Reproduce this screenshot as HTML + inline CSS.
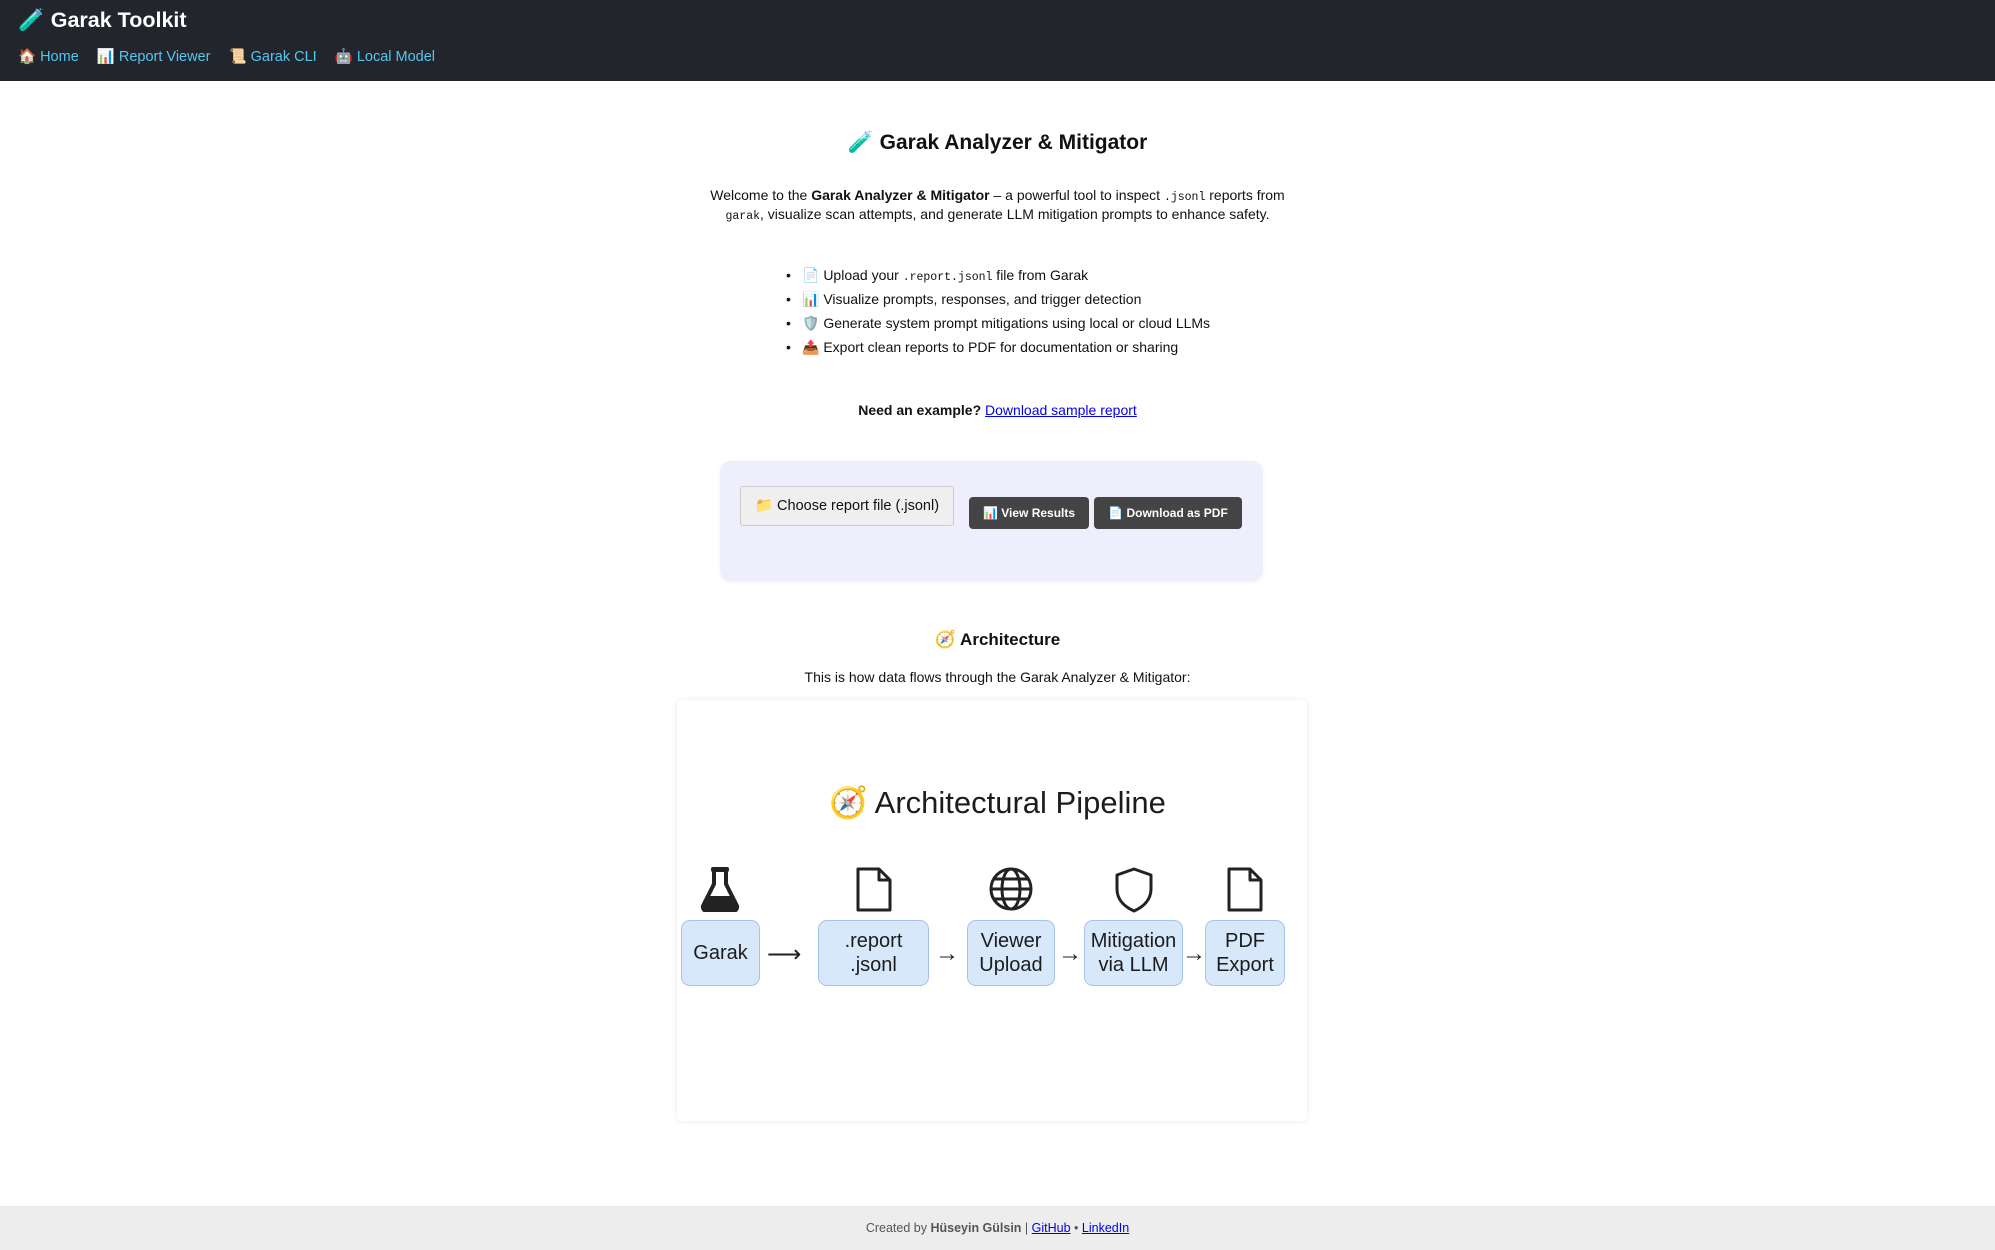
<!DOCTYPE html>
<html><head><meta charset="utf-8">
<style>
*{box-sizing:border-box;margin:0;padding:0}
body{width:1995px;height:1250px;position:relative;background:#fff;font-family:"Liberation Sans",Arial,sans-serif;color:#111;overflow:hidden}
.hdr{position:absolute;left:0;top:0;width:1995px;height:81px;background:#22252c}
.hdr .t{position:absolute;left:18px;top:8px;font-size:21.5px;font-weight:bold;color:#fff}
.nav{position:absolute;left:18px;top:48px;font-size:14.5px;color:#52c7ef}
.nav span{margin-right:14px}
.c{position:absolute;left:0;width:1995px;text-align:center}
code{font-family:"Liberation Mono",monospace;font-size:11.5px}
a{color:#0000ee;text-decoration:underline}
ul{position:absolute;left:786px;top:263px;list-style:none;font-size:14px}
ul li:before{content:"•";position:absolute;left:0}
ul li{padding-left:16px;position:relative;height:24px;line-height:24px}
.box{position:absolute;left:720px;top:461px;width:543px;height:120px;background:#eeeefc;border-radius:11px;box-shadow:0 1px 4px rgba(0,0,0,.06)}
.choose{position:absolute;left:740px;top:486px;width:214px;height:40px;background:#efefef;border:1px solid #ccc;border-radius:3px;font-size:14.5px;line-height:38px;text-align:center}
.btn{position:absolute;top:497px;height:32px;background:#444;color:#fff;border-radius:4px;font-size:12px;font-weight:bold;line-height:32px;text-align:center}
.card{position:absolute;left:677px;top:700px;width:630px;height:421px;background:#fff;box-shadow:0 0 6px rgba(0,0,0,.09);border-radius:4px}
.pb{position:absolute;top:920px;height:66px;background:#d8e8fb;border:1.5px solid #a5c3ea;border-radius:9px;font-size:20px;line-height:24px;text-align:center;display:flex;align-items:center;justify-content:center;color:#1c1c1c}
.ar{position:absolute;top:940px;font-size:24px;color:#222}
.ft{position:absolute;left:0;top:1206px;width:1995px;height:44px;background:#ededed;text-align:center;font-size:12.5px;line-height:44px;color:#555}
svg.i{position:absolute}
</style></head><body>
<div class="hdr">
 <div class="t">🧪 Garak Toolkit</div>
 <div class="nav"><span>🏠 Home</span> <span>📊 Report Viewer</span> <span>📜 Garak CLI</span> <span>🤖 Local Model</span></div>
</div>

<div class="c" style="top:131px;font-size:21px;font-weight:bold">🧪 Garak Analyzer &amp; Mitigator</div>
<div class="c" style="top:187px;font-size:14px;line-height:16px">Welcome to the <b>Garak Analyzer &amp; Mitigator</b> – a powerful tool to inspect <code>.jsonl</code> reports from<br><code>garak</code>, visualize scan attempts, and generate LLM mitigation prompts to enhance safety.</div>
<ul>
<li>📄 Upload your <code>.report.jsonl</code> file from Garak</li>
<li>📊 Visualize prompts, responses, and trigger detection</li>
<li>🛡️ Generate system prompt mitigations using local or cloud LLMs</li>
<li>📤 Export clean reports to PDF for documentation or sharing</li>
</ul>
<div class="c" style="top:402px;font-size:14px"><b>Need an example?</b> <a>Download sample report</a></div>

<div class="box"></div>
<div class="choose">📁 Choose report file (.jsonl)</div>
<div class="btn" style="left:969px;width:120px">📊 View Results</div>
<div class="btn" style="left:1094px;width:148px">📄 Download as PDF</div>

<div class="c" style="top:630px;font-size:17px;font-weight:bold">🧭 Architecture</div>
<div class="c" style="top:669px;font-size:14px">This is how data flows through the Garak Analyzer &amp; Mitigator:</div>

<div class="card"></div>
<div class="c" style="top:784px;font-size:31px;color:#1c1c1c">🧭 Architectural Pipeline</div>

<svg class="i" style="left:699px;top:866px" width="42" height="46" viewBox="0 0 42 46"><rect x="12" y="1" width="18" height="5" rx="2" fill="#222"/><path d="M15 6v12L4 40a4 4 0 0 0 4 5h26a4 4 0 0 0 4-5L27 18V6" fill="none" stroke="#222" stroke-width="4"/><path d="M10 30h22l5 10a3 3 0 0 1-3 4H8a3 3 0 0 1-3-4z" fill="#222"/></svg>
<svg class="i" style="left:853px;top:866px" width="42" height="48" viewBox="0 0 42 48"><path d="M5 3h21l11 11v30H5z M26 3v11h11" fill="none" stroke="#222" stroke-width="3" stroke-linejoin="round"/></svg>
<svg class="i" style="left:988px;top:866px" width="46" height="46" viewBox="0 0 46 46"><g fill="none" stroke="#222" stroke-width="3"><circle cx="23" cy="23" r="20"/><ellipse cx="23" cy="23" rx="9" ry="20"/><path d="M3 23h40M6 13h34M6 33h34"/></g></svg>
<svg class="i" style="left:1113px;top:866px" width="42" height="48" viewBox="0 0 42 48"><path d="M21 3L4 9v14c0 11 8 18 17 22 9-4 17-11 17-22V9z" fill="none" stroke="#222" stroke-width="3" stroke-linejoin="round"/></svg>
<svg class="i" style="left:1224px;top:866px" width="42" height="48" viewBox="0 0 42 48"><path d="M5 3h21l11 11v30H5z M26 3v11h11" fill="none" stroke="#222" stroke-width="3" stroke-linejoin="round"/></svg>

<div class="pb" style="left:681px;width:79px">Garak</div>
<div class="ar" style="left:767px">⟶</div>
<div class="pb" style="left:818px;width:111px">.report<br>.jsonl</div>
<div class="ar" style="left:935px">→</div>
<div class="pb" style="left:967px;width:88px">Viewer<br>Upload</div>
<div class="ar" style="left:1058px">→</div>
<div class="pb" style="left:1084px;width:99px">Mitigation<br>via LLM</div>
<div class="ar" style="left:1182px">→</div>
<div class="pb" style="left:1205px;width:80px">PDF<br>Export</div>

<div class="ft">Created by <b>Hüseyin Gülsin</b> | <a>GitHub</a> • <a>LinkedIn</a></div>
</body></html>
